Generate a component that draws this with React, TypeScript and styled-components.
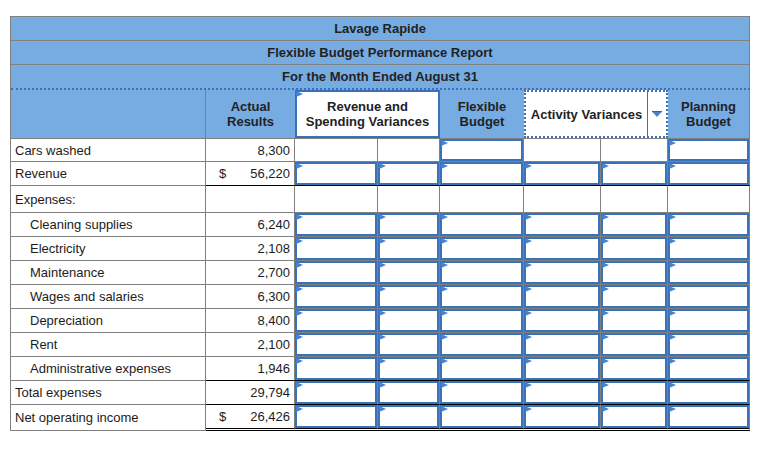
import React from 'react';
import styled, { createGlobalStyle } from 'styled-components';

const GREY = '#808080';
const BLUE = '#3b71b6';
const HEAD = '#77ace3';
const FLAG = '#3f82d8';

type Rule = 'none' | 'single' | 'double';

interface Line {
  label: string;
  indent?: boolean;
  dollar?: boolean;
  value?: string;
  h: number;
  entries: boolean[];
  rule: Rule;
}

const ALL = [true, true, true, true, true, true];
const NONE = [false, false, false, false, false, false];

const lines: Line[] = [
  { label: 'Cars washed', value: '8,300', h: 23, entries: [false, false, true, false, false, true], rule: 'none' },
  { label: 'Revenue', dollar: true, value: '56,220', h: 24, entries: ALL, rule: 'single' },
  { label: 'Expenses:', h: 27, entries: NONE, rule: 'none' },
  { label: 'Cleaning supplies', indent: true, value: '6,240', h: 24, entries: ALL, rule: 'none' },
  { label: 'Electricity', indent: true, value: '2,108', h: 24, entries: ALL, rule: 'none' },
  { label: 'Maintenance', indent: true, value: '2,700', h: 24, entries: ALL, rule: 'none' },
  { label: 'Wages and salaries', indent: true, value: '6,300', h: 24, entries: ALL, rule: 'none' },
  { label: 'Depreciation', indent: true, value: '8,400', h: 24, entries: ALL, rule: 'none' },
  { label: 'Rent', indent: true, value: '2,100', h: 24, entries: ALL, rule: 'none' },
  { label: 'Administrative expenses', indent: true, value: '1,946', h: 24, entries: ALL, rule: 'single' },
  { label: 'Total expenses', value: '29,794', h: 24, entries: ALL, rule: 'single' },
  { label: 'Net operating income', dollar: true, value: '26,426', h: 26, entries: ALL, rule: 'double' },
];

const colWidths = [195, 89, 83, 62, 84, 77, 67, 82];

const ruleBorder = (r: Rule) =>
  r === 'double' ? '3px double #000' : r === 'single' ? '1px solid #000' : `1px solid ${GREY}`;
const ruleWidth = (r: Rule) => (r === 'double' ? 3 : 1);

const Global = createGlobalStyle`
  *, *::before, *::after { box-sizing: border-box; }
  html, body { margin: 0; padding: 0; background: #fff; }
  body {
    font-family: "Liberation Sans", Arial, sans-serif;
    font-size: 13px;
    color: #1c1c1c;
  }
`;

const Page = styled.div`
  padding: 16px 0 0 10px;
`;

const Table = styled.table`
  width: 740px;
  table-layout: fixed;
  border-collapse: separate;
  border-spacing: 0;
  border-top: 1px solid ${GREY};
  border-left: 1px solid ${GREY};
`;

const TitleCell = styled.td<{ $dotted?: boolean }>`
  height: ${(p) => (p.$dotted ? 25 : 24)}px;
  padding: 0;
  background: ${HEAD};
  text-align: center;
  vertical-align: middle;
  font-weight: bold;
  color: #222;
  border-right: 1px solid ${GREY};
  border-bottom: ${(p) => (p.$dotted ? `2px dotted ${BLUE}` : `1px solid ${GREY}`)};
`;

const HeadCell = styled.td<{ $edge?: boolean }>`
  height: 49px;
  padding: 0;
  background: ${HEAD};
  text-align: center;
  vertical-align: middle;
  font-weight: bold;
  line-height: 15px;
  color: #222;
  border-bottom: 1px solid ${GREY};
  border-right: ${(p) => (p.$edge ? `1px solid ${GREY}` : 'none')};
`;

const HeadSlot = styled.td`
  height: 49px;
  padding: 0;
  vertical-align: top;
  background: #fff;
  border-bottom: 1px solid ${GREY};
`;

const HeadBox = styled.div`
  position: relative;
  height: 48px;
  border: 2px solid ${BLUE};
  background: #fff;
  display: flex;
  align-items: center;
  justify-content: center;
  text-align: center;
  font-weight: bold;
  line-height: 15px;
  color: #222;

  &::before {
    content: '';
    position: absolute;
    top: -1px;
    left: -1px;
    border-left: 7px solid ${FLAG};
    border-top: 3px solid transparent;
    border-bottom: 3px solid transparent;
  }
`;

const DropBox = styled.div`
  height: 48px;
  border: 2px dotted ${BLUE};
  background: #fff;
  display: flex;
  align-items: stretch;
`;

const DropLabel = styled.div`
  flex: 1;
  display: flex;
  align-items: center;
  justify-content: center;
  font-weight: bold;
  white-space: nowrap;
  color: #222;
`;

const DropToggle = styled.div`
  width: 19px;
  border-left: 1px solid ${BLUE};
  display: flex;
  align-items: center;
  justify-content: center;
`;

const LabelCell = styled.td<{ $indent?: boolean; $h: number }>`
  height: ${(p) => p.$h}px;
  padding: 0 0 0 ${(p) => (p.$indent ? 19 : 4)}px;
  vertical-align: middle;
  white-space: nowrap;
  border-right: 1px solid ${GREY};
  border-bottom: 1px solid ${GREY};
`;

const AmountCell = styled.td<{ $rule: Rule; $h: number }>`
  height: ${(p) => p.$h}px;
  padding: 0 4px 0 13px;
  vertical-align: middle;
  border-right: 1px solid ${GREY};
  border-bottom: ${(p) => ruleBorder(p.$rule)};
`;

const Amount = styled.div`
  display: flex;
  justify-content: space-between;
  white-space: nowrap;
`;

const EntryCell = styled.td<{ $rule: Rule; $h: number }>`
  height: ${(p) => p.$h}px;
  padding: 0;
  vertical-align: top;
  border-right: 1px solid ${GREY};
  border-bottom: ${(p) => ruleBorder(p.$rule)};
`;

const Entry = styled.div<{ $h: number }>`
  position: relative;
  height: ${(p) => p.$h}px;
  border: 2px solid ${BLUE};
  background: #fff;

  &::before {
    content: '';
    position: absolute;
    top: -1px;
    left: -1px;
    border-left: 7px solid ${FLAG};
    border-top: 3px solid transparent;
    border-bottom: 3px solid transparent;
  }
`;

const Arrow = () => (
  <svg width="10" height="6" viewBox="0 0 10 6">
    <rect x="0" y="0" width="10" height="1.2" fill="#2f64a8" />
    <polygon points="0.5,1 9.5,1 5,6" fill="#4a82c8" />
  </svg>
);

export default function App() {
  return (
    <>
      <Global />
      <Page>
        <Table>
          <colgroup>
            {colWidths.map((w, i) => (
              <col key={i} style={{ width: w }} />
            ))}
          </colgroup>
          <tbody>
            <tr>
              <TitleCell colSpan={8}>Lavage Rapide</TitleCell>
            </tr>
            <tr>
              <TitleCell colSpan={8}>Flexible Budget Performance Report</TitleCell>
            </tr>
            <tr>
              <TitleCell colSpan={8} $dotted>
                For the Month Ended August 31
              </TitleCell>
            </tr>
            <tr>
              <HeadCell $edge />
              <HeadCell>
                Actual
                <br />
                Results
              </HeadCell>
              <HeadSlot colSpan={2}>
                <HeadBox>
                  <span>
                    Revenue and
                    <br />
                    Spending Variances
                  </span>
                </HeadBox>
              </HeadSlot>
              <HeadCell>
                Flexible
                <br />
                Budget
              </HeadCell>
              <HeadSlot colSpan={2}>
                <DropBox>
                  <DropLabel>Activity Variances</DropLabel>
                  <DropToggle>
                    <Arrow />
                  </DropToggle>
                </DropBox>
              </HeadSlot>
              <HeadCell $edge>
                Planning
                <br />
                Budget
              </HeadCell>
            </tr>
            {lines.map((ln) => (
              <tr key={ln.label}>
                <LabelCell $indent={ln.indent} $h={ln.h}>
                  {ln.label}
                </LabelCell>
                <AmountCell $rule={ln.rule} $h={ln.h}>
                  <Amount>
                    <span>{ln.dollar ? '$' : ''}</span>
                    <span>{ln.value ?? ''}</span>
                  </Amount>
                </AmountCell>
                {ln.entries.map((on, i) => (
                  <EntryCell key={i} $rule={ln.rule} $h={ln.h}>
                    {on ? <Entry $h={ln.h - ruleWidth(ln.rule)} /> : null}
                  </EntryCell>
                ))}
              </tr>
            ))}
          </tbody>
        </Table>
      </Page>
    </>
  );
}
